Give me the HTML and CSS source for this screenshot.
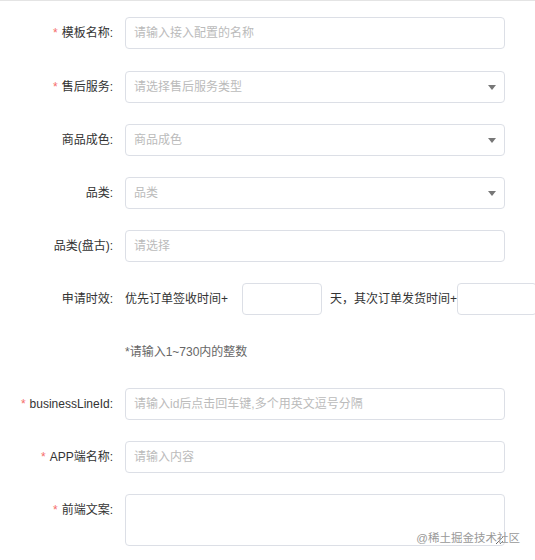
FILE: index.html
```html
<!DOCTYPE html>
<html lang="zh-CN">
<head>
    <meta charset="UTF-8">
    <meta name="viewport" content="width=device-width, initial-scale=1.0">
    <title>模板配置</title>
    <link rel="stylesheet" href="styles.css">
</head>
<body>

<div class="page">
    <form class="form">
        <div class="form-item first-item">
            <label class="form-label required">模板名称:</label>
            <input class="input" type="text" placeholder="请输入接入配置的名称">
        </div>

        <div class="form-item">
            <label class="form-label required">售后服务:</label>
            <div class="select">
                <input class="input" type="text" placeholder="请选择售后服务类型" readonly>
                <span class="arrow"></span>
            </div>
        </div>

        <div class="form-item">
            <label class="form-label">商品成色:</label>
            <div class="select">
                <input class="input" type="text" placeholder="商品成色" readonly>
                <span class="arrow"></span>
            </div>
        </div>

        <div class="form-item">
            <label class="form-label">品类:</label>
            <div class="select">
                <input class="input" type="text" placeholder="品类" readonly>
                <span class="arrow"></span>
            </div>
        </div>

        <div class="form-item">
            <label class="form-label">品类(盘古):</label>
            <input class="input" type="text" placeholder="请选择">
        </div>

        <div class="form-item">
            <label class="form-label">申请时效:</label>
            <div class="inline-group">
                <span class="inline-text">优先订单签收时间+</span>
                <input class="input input-small first" type="text">
                <span class="inline-text">天，其次订单发货时间+</span>
                <input class="input input-small" type="text">
            </div>
        </div>

        <div class="form-item hint-item">
            <label class="form-label"></label>
            <span class="hint">*请输入1~730内的整数</span>
        </div>

        <div class="form-item">
            <label class="form-label required">businessLineId:</label>
            <input class="input" type="text" placeholder="请输入id后点击回车键,多个用英文逗号分隔">
        </div>

        <div class="form-item">
            <label class="form-label required">APP端名称:</label>
            <input class="input" type="text" placeholder="请输入内容">
        </div>

        <div class="form-item top">
            <label class="form-label required">前端文案:</label>
            <textarea class="textarea"></textarea>
        </div>
    </form>

    <div class="mark">@稀土掘金技术社区</div>
</div>

</body>
</html>
```

FILE: styles.css
```css
html, body {
    margin: 0;
    padding: 0;
    overflow: hidden;
}

body {
    font-family: "Liberation Sans", "Noto Sans CJK SC", sans-serif;
    font-size: 12px;
    color: #333;
    background-color: #fff;
}

.page {
    position: relative;
    height: 560px;
    border-top: 1px solid #e4e4e4;
    box-sizing: border-box;
}

.form {
    padding-top: 16px;
}

.form-item {
    display: flex;
    align-items: center;
    margin-bottom: 21px;
    white-space: nowrap;
}

.form-item.first-item {
    margin-bottom: 22px;
}

.form-item.hint-item {
    margin-bottom: 20px;
}

.form-item.top {
    align-items: flex-start;
}

.form-label {
    width: 125px;
    flex-shrink: 0;
    padding-right: 12px;
    box-sizing: border-box;
    text-align: right;
    line-height: 32px;
    color: #333;
}

.form-label.required::before {
    content: "*";
    color: #f56c6c;
    margin-right: 4px;
}

.input {
    width: 380px;
    height: 32px;
    padding: 0 8px;
    border: 1px solid #dcdfe6;
    border-radius: 4px;
    box-sizing: border-box;
    font-family: inherit;
    font-size: 12px;
    color: #333;
    outline: none;
    background: #fff;
}

.input::placeholder,
.textarea::placeholder {
    color: #bbb;
}

.select {
    position: relative;
    flex-shrink: 0;
}

.select .arrow {
    position: absolute;
    right: 9px;
    top: 14px;
    width: 0;
    height: 0;
    border-left: 4px solid transparent;
    border-right: 4px solid transparent;
    border-top: 5px solid #777;
}

.inline-group {
    display: flex;
    align-items: center;
}

.inline-text {
    line-height: 32px;
}

.input-small {
    width: 80px;
    flex-shrink: 0;
    margin-right: 8px;
}

.input-small.first {
    margin-left: 14px;
}

.hint {
    line-height: 32px;
    color: #666;
}

.textarea {
    width: 380px;
    height: 52px;
    padding: 5px 8px;
    border: 1px solid #dcdfe6;
    border-radius: 4px;
    box-sizing: border-box;
    font-family: inherit;
    font-size: 12px;
    outline: none;
}

.mark {
    position: absolute;
    right: 15px;
    bottom: 15px;
    font-size: 11.5px;
    color: #999;
    text-shadow: 0 0 2px #fff;
}
```
